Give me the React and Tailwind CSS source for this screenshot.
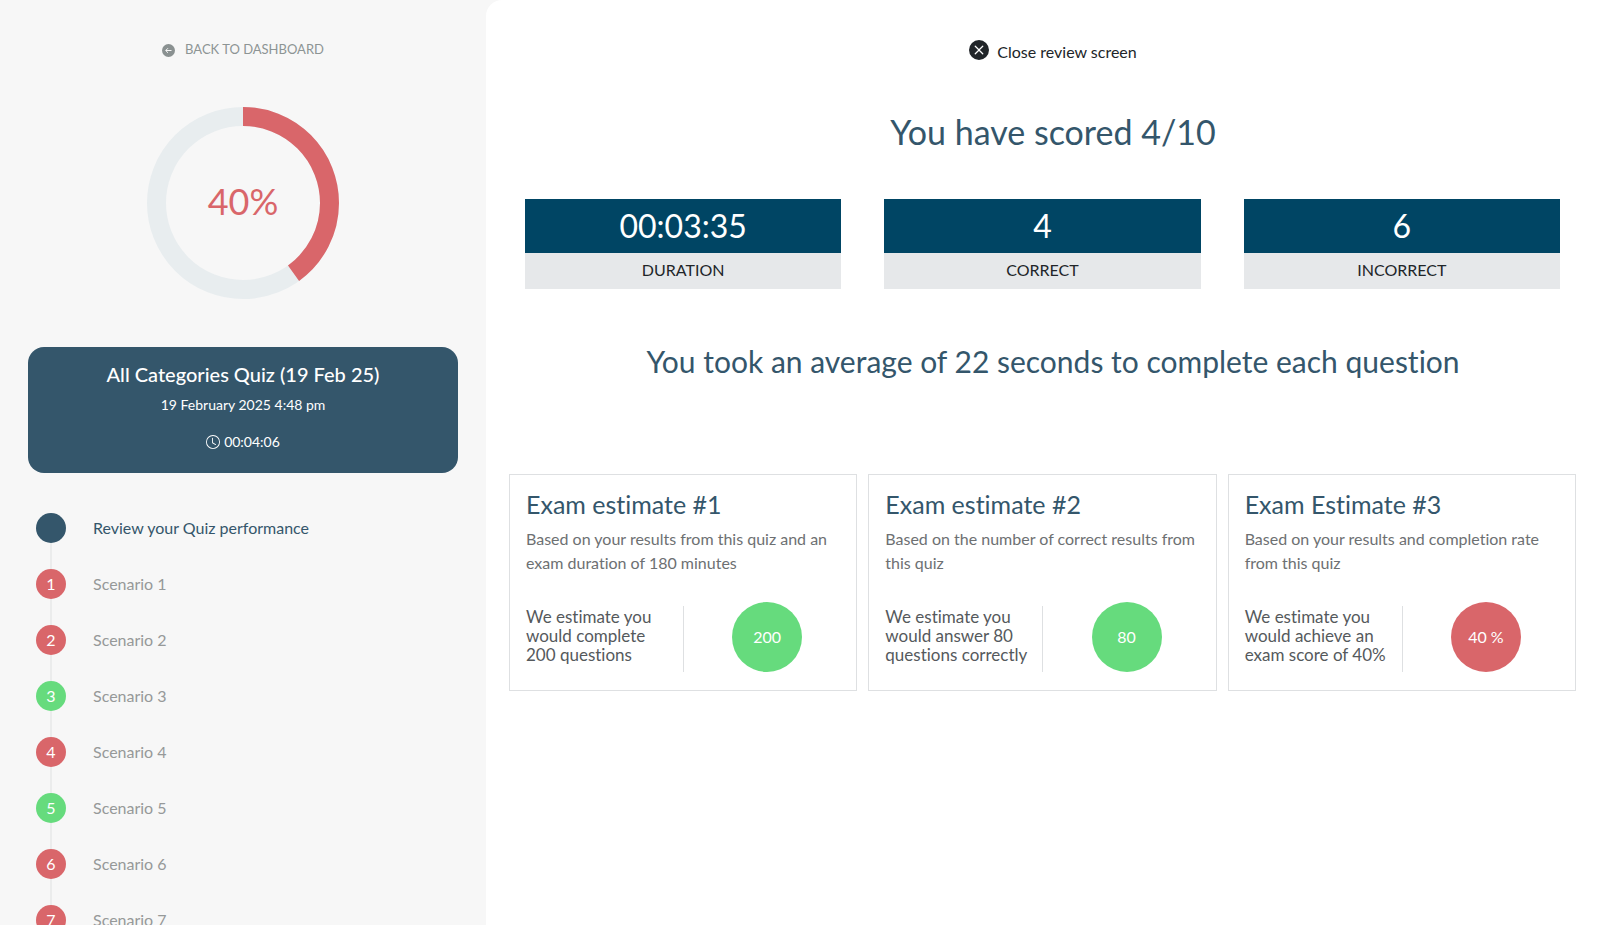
const RED = "bg-[#d9666a]";
const GREEN = "bg-[#66db7d]";

const SCENARIOS = [
  { id: 1, correct: false },
  { id: 2, correct: false },
  { id: 3, correct: true },
  { id: 4, correct: false },
  { id: 5, correct: true },
  { id: 6, correct: false },
  { id: 7, correct: false },
];

const STATS = [
  { label: "DURATION", value: "00:03:35" },
  { label: "CORRECT", value: "4" },
  { label: "INCORRECT", value: "6" },
];

const ESTIMATES = [
  {
    title: "Exam estimate #1",
    text: "Based on your results from this quiz and an exam duration of 180 minutes",
    lines: ["We estimate you", "would complete", "200 questions"],
    result: "200",
    color: GREEN,
  },
  {
    title: "Exam estimate #2",
    text: "Based on the number of correct results from this quiz",
    lines: ["We estimate you", "would answer 80", "questions correctly"],
    result: "80",
    color: GREEN,
  },
  {
    title: "Exam Estimate #3",
    text: "Based on your results and completion rate from this quiz",
    lines: ["We estimate you", "would achieve an", "exam score of 40%"],
    result: "40 %",
    color: RED,
  },
];

function ScoreRing({ percent }) {
  const radius = 86.5;
  const length = 2 * Math.PI * radius;

  return (
    <div className="grid place-items-center">
      <svg viewBox="0 0 192 192" className="col-start-1 row-start-1 size-48 -rotate-90" fill="none" strokeWidth="19">
        <circle cx="96" cy="96" r={radius} stroke="#e8edef" />
        <circle cx="96" cy="96" r={radius} stroke="#d9666a" strokeDasharray={`${(length * percent) / 100} ${length}`} />
      </svg>
      <span className="col-start-1 row-start-1 pb-1 text-4xl text-[#d9666a]">{percent}%</span>
    </div>
  );
}

function StepItem({ label, number, color, active, last }) {
  return (
    <li>
      <a href="#" className="flex items-center">
        <span className={`flex size-[30px] items-center justify-center rounded-full text-base text-white ${color}`}>{number}</span>
        <span className={`ml-[27px] text-base ${active ? "text-[#34566b]" : "text-[#969999]"}`}>{label}</span>
      </a>
      {!last && <div className="ml-[14px] h-[26px] w-[2px] bg-[#ebecec]" />}
    </li>
  );
}

function Sidebar() {
  return (
    <aside className="h-screen w-[486px] shrink-0 overflow-hidden px-7 pt-[38px]">
      <a href="#" className="flex h-6 items-center justify-center gap-[10px] text-[13px] text-[#8d9494]">
        <svg viewBox="0 0 13 13" className="size-[13px]" fill="none">
          <circle cx="6.5" cy="6.5" r="6.5" fill="#8a9191" />
          <path d="M9.5 6.5H3.8M6 4.2 3.7 6.5 6 8.8" stroke="#f7f7f7" />
        </svg>
        BACK TO DASHBOARD
      </a>

      <div className="mt-[45px]">
        <ScoreRing percent={40} />
      </div>

      <div className="mt-12 flex h-[126px] flex-col items-center rounded-2xl bg-[#34566b] pt-[15px] text-white">
        <h2 className="text-xl leading-6 font-medium">All Categories Quiz (19 Feb 25)</h2>
        <p className="mt-[9px] text-sm leading-5">19 February 2025 4:48 pm</p>
        <p className="mt-[17px] flex items-center gap-1 text-sm leading-5">
          <svg viewBox="0 0 16 16" className="size-[14px]" fill="currentColor">
            <path d="M8 3.5a.5.5 0 0 0-1 0V9a.5.5 0 0 0 .25.43l3.5 2a.5.5 0 0 0 .5-.86L8 8.71z" />
            <path d="M8 16A8 8 0 1 0 8 0a8 8 0 0 0 0 16m7-8A7 7 0 1 1 1 8a7 7 0 0 1 14 0" />
          </svg>
          00:04:06
        </p>
      </div>

      <ul className="mt-10 ml-2">
        <StepItem label="Review your Quiz performance" color="bg-[#34566b]" active />
        {SCENARIOS.map((s, idx) => (
          <StepItem
            key={s.id}
            label={`Scenario ${s.id}`}
            number={s.id}
            color={s.correct ? GREEN : RED}
            last={idx === SCENARIOS.length - 1}
          />
        ))}
      </ul>
    </aside>
  );
}

function StatBox({ label, value }) {
  return (
    <div className="px-4 text-center">
      <div className="h-[54px] bg-[#004564] text-[32px] leading-[54px] text-white">{value}</div>
      <div className="h-9 bg-[#e6e8ea] text-base leading-[34px] text-[#212529]">{label}</div>
    </div>
  );
}

function EstimateCard({ title, text, lines, result, color }) {
  return (
    <article className="border border-[#dee0e2] px-4 pt-[15px] pb-[18px]">
      <h3 className="text-[25px] leading-7 text-[#34566b]">{title}</h3>
      <p className="mt-[9px] h-12 text-base leading-6 text-[#6d7072]">{text}</p>
      <div className="mt-[27px] flex items-center">
        <p className="w-1/2 pb-1 text-[17px] leading-[19px] whitespace-nowrap text-[#55595c]">
          {lines.map((line) => (
            <span key={line} className="block">{line}</span>
          ))}
        </p>
        <div className="h-[66px] w-px self-end bg-[#dee0e2]" />
        <div className="flex flex-1 justify-center pl-[10px]">
          <span className={`flex size-[70px] items-center justify-center rounded-full text-base text-white ${color}`}>{result}</span>
        </div>
      </div>
    </article>
  );
}

export default function App() {
  return (
    <div className="flex bg-[#f7f7f7] font-['Lato',sans-serif] [font-variant-ligatures:none]">
      <Sidebar />
      <main className="min-h-screen flex-1 rounded-tl-2xl bg-white pt-10 pr-[13px] pl-[23px]">
        <button type="button" className="mx-auto flex h-6 items-start gap-2 text-base text-[#212529]">
          <svg viewBox="0 0 16 16" className="size-5" fill="currentColor">
            <path d="M16 8A8 8 0 1 1 0 8a8 8 0 0 1 16 0M5.354 4.646a.5.5 0 1 0-.708.708L7.293 8l-2.647 2.646a.5.5 0 0 0 .708.708L8 8.707l2.646 2.647a.5.5 0 0 0 .708-.708L8.707 8l2.647-2.646a.5.5 0 0 0-.708-.708L8 7.293z" />
          </svg>
          Close review screen
        </button>

        <h1 className="mt-12 text-center text-[34px] leading-10 text-[#34566b]">You have scored 4/10</h1>

        <section className="mt-[47px] mr-[21px] grid grid-cols-3 gap-[11px]">
          {STATS.map((stat) => (
            <StatBox key={stat.label} {...stat} />
          ))}
        </section>

        <h2 className="mt-[52px] text-center text-3xl leading-10 text-[#34566b]">
          You took an average of 22 seconds to complete each question
        </h2>

        <section className="mt-[93px] mr-[21px] grid grid-cols-3 gap-[11px]">
          {ESTIMATES.map((item) => (
            <EstimateCard key={item.title} {...item} />
          ))}
        </section>
      </main>
    </div>
  );
}
